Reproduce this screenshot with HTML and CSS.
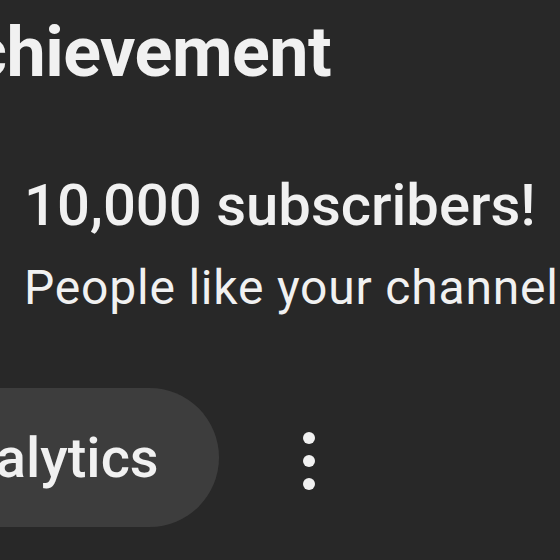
FILE: index.html
```html
<!DOCTYPE html>
<html lang="en">
<head>
  <meta charset="UTF-8" />
  <title>Achievement</title>
  <link rel="stylesheet" href="styles.css">
</head>
<body>
  <div class="card">
    <h1 class="card-title">Achievement</h1>
    <div class="milestone">
      <h2>10,000 subscribers!</h2>
      <p>People like your channel</p>
    </div>
    <div class="actions">
      <button class="pill">Analytics</button>
      <button class="more" aria-label="More">
        <span></span><span></span><span></span>
      </button>
    </div>
  </div>
</body>
</html>
```

FILE: styles.css
```css
body {
  margin: 0;
  background-color: #282828;
  font-family: Roboto, "Liberation Sans", sans-serif;
  color: #f1f1f1;
  overflow: hidden;
  width: 560px;
  height: 560px;
}
.card {
  display: flex;
  flex-direction: column;
  width: 700px;
}
.card-title {
  margin: 0 0 0 -76px;
  font-size: 70px;
  font-weight: 700;
  line-height: 104px;
  letter-spacing: -0.5px;
}
.milestone {
  padding: 66px 0 0 24px;
}
.milestone h2 {
  margin: 0;
  font-size: 58px;
  font-weight: 500;
  line-height: 70px;
}
.milestone p {
  margin: 18px 0 0;
  font-size: 48px;
  letter-spacing: 0.8px;
  white-space: nowrap;
  line-height: 60px;
}
.actions {
  display: flex;
  align-items: center;
  gap: 84px;
  margin-top: 70px;
}
.pill {
  height: 139px;
  padding: 0 60px 0 120px;
  margin-left: -192px;
  border: none;
  border-radius: 70px;
  background-color: #3d3d3d;
  color: #f1f1f1;
  font-family: inherit;
  font-size: 56px;
  font-weight: 500;
}
.more {
  display: flex;
  flex-direction: column;
  gap: 11px;
  margin-top: 6px;
  padding: 0;
  border: none;
  background: none;
}
.more span {
  width: 12px;
  height: 12px;
  border-radius: 50%;
  background-color: #f1f1f1;
}
```
